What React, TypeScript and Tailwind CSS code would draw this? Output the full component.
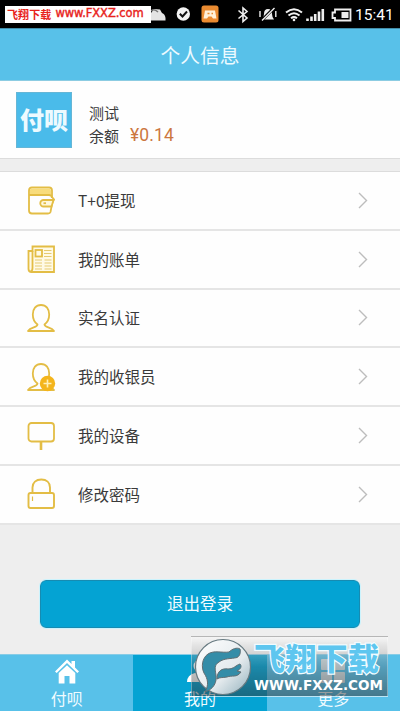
import type { ReactNode } from "react";

const WalletIcon = () => (
  <svg width="30" height="30" viewBox="0 0 30 30" fill="none" stroke="#e3bd45" strokeWidth="1.8">
    <path d="M3 5.5Q3 2.5 6 2.5H23Q26 2.5 26 5.5V12L28 14.5L26 19L24.5 27Q24 28.5 22 28.5H6Q3 28.5 3 25.5Z" />
    <path d="M4 4.5Q4 3.5 6 3.5H23Q25 3.5 25 5.5V9.5H4Z" fill="#f8dc7c" stroke="none" />
    <path d="M3 10H23Q26 10 26 13" />
    <path d="M27.5 15H17.5A3.2 3.2 0 0 0 17.5 21.5H25.5Z" fill="#fff8dc" />
    <path d="M17.5 18.2H20" />
  </svg>
);

const BillIcon = () => (
  <svg width="30" height="30" viewBox="0 0 30 30" fill="none" stroke="#e3bd45" strokeWidth="1.8">
    <path d="M6.5 2.5H28V28H5.5Q2.5 28 2.5 25V7H6.5Z" fill="#fffae6" />
    <path d="M6.5 7V24Q6.5 27 4.5 27.5" />
    <rect x="9.5" y="6" width="6.5" height="6.5" />
    <path d="M18 6.5H25.5M18 9.5H25.5M18 12.5H25.5M9 16H16M9 19H16M9 22H16M9 25H16M18.5 16H25.5M18.5 19H25.5M18.5 22H25.5M18.5 25H25.5" strokeWidth="1" stroke="#e6cb70" />
  </svg>
);

const PersonIcon = () => (
  <svg width="30" height="30" viewBox="0 0 30 30" fill="none" stroke="#e3bd45" strokeWidth="1.8" strokeLinejoin="round">
    <path d="M15 2C9.8 2 6.800 6 6.800 11.5C6.800 16 8.800 19.5 11.500 21.5C11.500 24.500 4.500 24 2 28H28C25.500 24 18.500 24.500 18.500 21.5C21.200 19.5 23.200 16 23.200 11.5C23.200 6 20.200 2 15 2Z" />
  </svg>
);

const CashierIcon = () => (
  <svg width="30" height="30" viewBox="0 0 30 30" fill="none" stroke="#e3bd45" strokeWidth="1.8" strokeLinejoin="round">
    <path d="M15 2C9.8 2 6.800 6 6.800 11.5C6.800 16 8.800 19.5 11.500 21.5C11.500 24.500 4.500 24 2 28H28C25.500 24 18.500 24.500 18.500 21.5C21.200 19.5 23.200 16 23.200 11.5C23.200 6 20.200 2 15 2Z" />
    <circle cx="21.5" cy="21.5" r="7.7" fill="#f4b51c" stroke="none" />
    <path d="M17.5 21.5H25.5M21.5 17.5V25.5" stroke="#fff0b8" strokeWidth="1.6" />
  </svg>
);

const DeviceIcon = () => (
  <svg width="30" height="30" viewBox="0 0 30 30" fill="none" stroke="#e3bd45" strokeWidth="1.8">
    <rect x="2.5" y="2" width="25.5" height="18.5" rx="3" />
    <path d="M15 20.5V29" strokeWidth="2.6" />
  </svg>
);

const LockIcon = () => (
  <svg width="30" height="32" viewBox="0 0 30 32" fill="none" stroke="#e3bd45" strokeWidth="1.9">
    <rect x="2.5" y="15" width="25.5" height="15" rx="2" />
    <path d="M6.5 15V9.5C6.5 4.5 10 1.5 15.3 1.5S24 4.5 24 9.5V15" />
    <path d="M6.5 18.5V23" strokeWidth="1.2" />
  </svg>
);

const menuItems: { label: string; icon: ReactNode }[] = [
  { label: "T+0提现", icon: <WalletIcon /> },
  { label: "我的账单", icon: <BillIcon /> },
  { label: "实名认证", icon: <PersonIcon /> },
  { label: "我的收银员", icon: <CashierIcon /> },
  { label: "我的设备", icon: <DeviceIcon /> },
  { label: "修改密码", icon: <LockIcon /> },
];

const StatusBar = () => (
  <div className="flex h-[28px] items-center bg-black pl-[5px] text-white">
    <div className="flex h-[17px] w-[146px] shrink-0 items-center bg-white pl-[2px] text-[11px] font-bold whitespace-nowrap text-[#e8231c]">
      <span className="tracking-[0.1px]">飞翔下载</span>
      <span className="ml-[4px] font-['DejaVu_Sans',sans-serif] text-[11.5px] font-normal tracking-[-0.1px] [-webkit-text-stroke:0.4px_#e8231c]">
        www.FXXZ.com
      </span>
    </div>
    {/* Notification icons */}
    <svg className="shrink-0" width="175" height="28" viewBox="151 0 175 28" fill="none">
      <path d="M151 20.5V13L154 9L160 9.5L162 13Q165 14 165.5 18V20.5Z" fill="#e4e4e4" />
      <path d="M151 11Q154 8 158 12" stroke="#777" strokeWidth="1.5" />
      <circle cx="183.3" cy="14" r="6.7" fill="#f3f3f3" />
      <path d="M179.8 13.8L182.5 16.5L187 11.5" stroke="#111" strokeWidth="2" />
      <rect x="201.5" y="5.5" width="17" height="17" rx="2.5" fill="#ea8b31" />
      <path d="M203.500 18.500L205 10.500H215L216.500 18.500H213L211.500 16.500H208.500L207 18.500Z" fill="#fff0d9" />
      <path d="M207.500 13.500H209.500M211.500 13.500H213" stroke="#ea8b31" strokeWidth="1.600" />
      <path d="M238.5 10.5L247 18L243 21.5V8L247 11.5L238.5 18.5" stroke="#eee" strokeWidth="1.6" />
      <path d="M262 19.5Q264 17 264 14Q264 9 268 9Q272 9 272 14Q272 17 274 19.5Z" fill="#eee" />
      <path d="M261.5 20.5L274 8" stroke="#000" strokeWidth="3" />
      <path d="M262 20.5L274.5 8M260 11V17M275.8 11V17" stroke="#eee" strokeWidth="1.4" />
      <path d="M286 12.5Q294 6 302 12.5M288.5 15.5Q294 11 299.5 15.5M291 18.3Q294 16 297 18.3" stroke="#f2f2f2" strokeWidth="2" />
      <circle cx="294" cy="20" r="1.3" fill="#f2f2f2" />
      <path d="M307.5 21V18.5M311.5 21V16.5M315.2 21V14M319 21V11.5M322.8 21V9" stroke="#eee" strokeWidth="2.6" />
    </svg>
    <svg className="mt-[2px] ml-[5px] shrink-0" width="22" height="14" viewBox="0 0 22 14" fill="none">
      <path d="M4 1.5H19.5V12.5H4V10H1.5V4.5H4Z" stroke="#eee" strokeWidth="1.8" />
      <rect x="10.5" y="4" width="7" height="6" fill="#eee" />
    </svg>
    <span className="mt-[3px] ml-[2px] font-[Roboto,sans-serif] text-[15.5px] whitespace-nowrap">15:41</span>
  </div>
);

const Profile = () => (
  <section className="flex h-[78px] items-center border-b border-[#dcdcdc] bg-[#fefefe] pl-[16px]">
    <div className="flex h-[56px] w-[56px] items-center justify-center border border-[#65b6d6] bg-[#4abbea] pb-[2px] text-[24px] font-black text-[#edfaff]">
      付呗
    </div>
    <div className="ml-[17px] pt-[9px] text-[15px] leading-[23px] text-[#3c3c3c]">
      <p>测试</p>
      <p className="flex">
        余额
        <span className="ml-[11px] font-[Roboto,'Noto_Sans_CJK_SC',sans-serif] text-[17.5px] tracking-[0.1px] text-[#cc7740]">
          ¥0.14
        </span>
      </p>
    </div>
  </section>
);

const MenuRow = ({ label, icon }: { label: string; icon: ReactNode }) => (
  <li className="flex h-[58.8px] items-center border-b-2 border-[#e5e5e5] bg-[#fefefe] pr-[32px] pl-[26px]">
    {icon}
    <span className="ml-[22px] text-[15.5px] text-[#3a3a3a]">{label}</span>
    <svg className="ml-auto" width="10" height="17" viewBox="0 0 10 17" fill="none">
      <path d="M1 1L8.5 8.5L1 16" stroke="#bdbdbd" strokeWidth="1.4" />
    </svg>
  </li>
);

const TabBar = () => (
  <nav className="grid h-[57px] grid-cols-3 border-t border-[#87cce6] bg-[#58c1e9] text-[16px] leading-[20px] text-[#f0fbff]">
    <div className="flex flex-col items-center pt-[4px]">
      <svg width="24" height="25" viewBox="0 0 24 25">
        <path d="M12 0.5L16.5 5V2H20V8.5L24 12.5L22.3 14L12 4L1.7 14L0 12.5Z" fill="#fff" />
        <path d="M12 6.2L20.3 14V24.5H14.5V17H9.5V24.5H3.7V14Z" fill="#fff" />
      </svg>
      <span className="mt-[4px]">付呗</span>
    </div>
    <div className="flex flex-col items-center bg-[#04a3d3] pt-[4px]">
      <svg width="26" height="25" viewBox="0 0 26 25" fill="#fff">
        <circle cx="13" cy="7" r="6.5" />
        <path d="M0 23Q0 16 8 14H18Q26 16 26 23Z" />
      </svg>
      <span className="mt-[4px]">我的</span>
    </div>
    <div className="flex flex-col items-center pt-[4px]">
      <svg width="26" height="25" viewBox="0 0 26 25" fill="#d5e3e8">
        <rect x="1" width="11" height="11" rx="1" />
        <rect x="14" width="11" height="11" rx="1" />
        <rect x="1" y="13" width="11" height="11" rx="1" />
        <rect x="14" y="13" width="11" height="11" rx="1" />
      </svg>
      <span className="mt-[4px]">更多</span>
    </div>
  </nav>
);

// Site badge floating over the bottom right corner
const SiteBadge = () => (
  <div className="absolute top-[636px] left-[191px] flex h-[61px] w-[197px] items-center border border-white/35 bg-linear-to-b from-white/40 via-[#4c4c4c]/30 to-[#303030]/50 pl-[2px]">
    <svg className="shrink-0" width="58" height="58" viewBox="0 0 58 58">
      <defs>
        <linearGradient id="disc" x1="0" y1="0" x2="1" y2="1">
          <stop offset="0" stopColor="#fff" />
          <stop offset="0.6" stopColor="#e4eaed" />
          <stop offset="1" stopColor="#91b0bc" />
        </linearGradient>
      </defs>
      <circle cx="29" cy="29" r="27.5" fill="url(#disc)" stroke="#667980" strokeWidth="1.2" />
      <path
        d="M11 54C15 47 14 41 10 35C7 29 8 20 14 16C20 12 28 15 35 14C38 11 43 9 46 11C47 14 46 18 43 19.5C37 21 30 20 25 24C20 27 21 31 22 37C23 44 20 51 11 54Z"
        fill="#348da8"
        stroke="#606e73"
      />
      <path d="M23 41C23 33 28 30 34 31C40 31 42 27 46 26C48 28 47 31 43 33L47 34C43 40 38 37 33 39C28 40 26 39 23 41Z" fill="#348da8" stroke="#606e73" />
    </svg>
    <div className="ml-[2px] w-[133px] whitespace-nowrap">
      <p className="h-[36px] text-[31px] leading-[34px] font-black tracking-[0.3px] text-[#5ec6ef] [paint-order:stroke_fill] [-webkit-text-stroke:2.5px_#f2fcff]">
        飞翔下载
      </p>
      <p className="font-['DejaVu_Sans',sans-serif] text-[13.5px] leading-[18px] font-bold tracking-[0.05px] text-white">
        WWW.FXXZ.COM
      </p>
    </div>
  </div>
);

export default function App() {
  return (
    <main className="relative flex h-[711px] w-[400px] flex-col overflow-hidden bg-[#eeeeee] font-['Noto_Sans_CJK_SC',sans-serif]">
      <StatusBar />
      <header className="flex h-[53px] items-center justify-center border-t border-b border-t-[#438da9] border-b-[#8ccce2] bg-[#58c1e9] text-[19.8px] text-[#edfaff]">
        个人信息
      </header>
      <Profile />
      <ul className="mt-[12px] border-t border-[#dcdcdc]">
        {menuItems.map((item) => (
          <MenuRow key={item.label} {...item} />
        ))}
      </ul>
      <button className="mx-[40px] mt-[55px] h-[48px] rounded-[6px] border border-[#178bb1] bg-[#04a3d3] text-[16.5px] text-[#f0fbff] outline-1 outline-[#cbf3fd]">
        退出登录
      </button>
      <div className="mt-auto">
        <TabBar />
      </div>
      <SiteBadge />
    </main>
  );
}
